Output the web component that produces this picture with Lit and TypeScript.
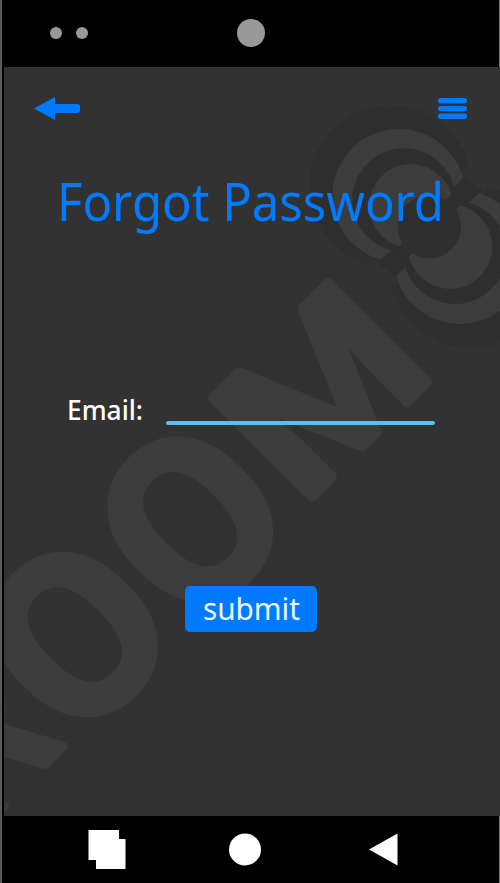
import { LitElement, html, css, svg } from "lit";
import { customElement } from "lit/decorators.js";

@customElement("app-root")
export class AppRoot extends LitElement {
  static styles = css`
    :host { display: block; height: 883px; background: #5c5c5c; padding-left: 2px; box-sizing: border-box; overflow: hidden; font-family: "Noto Sans", "Open Sans", sans-serif; }
    .phone { height: 883px; display: flex; flex-direction: column; background: #000; }
    .sensors { height: 67px; display: flex; align-items: center; box-sizing: border-box; padding: 0 0 1px 48px; border-right: 1px solid #777; }
    .dot { width: 12px; height: 12px; border-radius: 50%; background: #999; margin-right: 14px; }
    .camera { width: 28px; height: 28px; border-radius: 50%; background: #999; margin-left: 134.5px; }
    .screen { height: 749px; box-sizing: border-box; margin-left: 2px; background: #323232; position: relative; overflow: hidden; }
    .mark { position: absolute; left: -4px; top: -67px; width: 500px; height: 883px; }
    .mark text { font-family: Roboto, sans-serif; font-weight: 500; font-size: 201px; fill: #3c3c3c; stroke: #3c3c3c; stroke-width: 8px; stroke-linejoin: round; }
    .mark .o { stroke-width: 10px; }
    .mark .m { stroke-width: 10px; }
    .lit { fill: #3c3c3c; }
    .dim { fill: #2e2e2e; }
    .content { position: relative; display: flex; flex-direction: column; height: 100%; }
    .bar { display: flex; justify-content: space-between; align-items: flex-start; padding: 29px 33px 0 30px; height: 54px; box-sizing: border-box; }
    .icon { display: block; fill: #007bff; }
    svg.text { display: block; overflow: visible; }
    .title { margin: 47px 0 0 54px; height: 80px; }
    .title text { font-size: 52.500px; font-weight: 400; fill: #007bff; }
    .field { display: flex; align-items: flex-start; margin: 145px 0 0 63px; height: 50px; }
    .field text { font-size: 27.500px; font-weight: 500; fill: #fff; }
    .line { width: 269px; height: 4px; margin: 28px 0 0 19px; border-radius: 2px; background: #5ebcf0; }
    button { font: inherit; border: 0; padding: 0; margin: 143px 0 0 181px; width: 132px; height: 46px; border-radius: 5px; background: #007bff; }
    button text { font-size: 30px; fill: #eef8ff; }
    .nav { flex: 1; border-right: 1px solid #777; }
    .nav svg { display: block; fill: #fff; }
  `;

  private fit(label: string, width: number, height: number, x: number, y: number, length: number) {
    return html`<svg class="text" width=${width} height=${height}>
      <text x=${x} y=${y} textLength=${length} lengthAdjust="spacingAndGlyphs">${label}</text>
    </svg>`;
  }

  private watermark() {
    return svg`
      <g transform="rotate(-45)">
        <text x="-605" y="573">R</text>
        <text class="o" transform="translate(-395.500 501) scale(1.13 1.11)" x="-69.500" y="72">O</text>
        <text class="o" transform="translate(-232.600 501) scale(1.13 1.11)" x="-69.500" y="72">O</text>
        <text class="m" transform="translate(-136 572) scale(1.1 .98)" x="-9" y="0">M</text>
      </g>
      <g transform="translate(290 60) scale(.333333)">
        <defs>
          <clipPath id="a"><path d="M-100-100H953L-100 953z"/></clipPath>
          <clipPath id="b"><path d="M-100-100H973L-100 973z"/></clipPath>
          <clipPath id="e"><path d="M-100-100H987L-100 987z"/></clipPath>
          <clipPath id="f"><path d="M1200 1200V-253L-253 1200z"/></clipPath>
          <clipPath id="c"><path d="M1200 1200V-235L-235 1200z"/></clipPath>
          <clipPath id="d"><path d="M1200 1200V-220L-220 1200z"/></clipPath>
        </defs>
        <circle class="dim" cx="302" cy="379" r="244" clip-path="url(#a)"/>
        <circle class="dim" cx="540" cy="620" r="244" clip-path="url(#d)"/>
        <path class="dim" d="M520 345L575 392L318 655L255 600z"/>
        <circle class="lit" cx="327" cy="407" r="200" clip-path="url(#b)"/>
        <circle class="lit" cx="510" cy="592" r="200" clip-path="url(#c)"/>
        <circle class="dim" cx="342" cy="420" r="155" clip-path="url(#e)"/>
        <circle class="dim" cx="495" cy="577" r="155" clip-path="url(#f)"/>
        <circle class="lit" cx="363" cy="438" r="126" clip-path="url(#e)"/>
        <circle class="lit" cx="480" cy="560" r="127" clip-path="url(#f)"/>
        <circle class="dim" cx="418" cy="500" r="95"/>
      </g>`;
  }

  render() {
    return html`<div class="phone">
      <div class="sensors"><i class="dot"></i><i class="dot"></i><i class="camera"></i></div>
      <main class="screen">
        <svg class="mark" viewBox="0 0 500 883" aria-hidden="true">${this.watermark()}</svg>
        <div class="content">
          <div class="bar">
            <svg class="icon" width="47" height="25"><path d="M0 12.500L21 1V8H43Q46 8 46 11V14Q46 17 43 17H21V24z"/></svg>
            <svg class="icon" width="29" height="24"><rect y="2" width="29" height="5.500" rx="2.700"/><rect y="10" width="29" height="5.200" rx="2.600"/><rect y="17.500" width="29" height="5.500" rx="2.700"/></svg>
          </div>
          <div class="title">${this.fit("Forgot Password", 395, 70, -1, 53, 387)}</div>
          <div class="field">${this.fit("Email:", 80, 45, 0, 27, 76)}<div class="line"></div></div>
          <button>${this.fit("submit", 132, 46, 18, 34, 97)}</button>
        </div>
      </main>
      <nav class="nav"><svg width="497" height="67"><path d="M86.500 14H117V23H123.500V53H94V44H86.500z"/><circle cx="243" cy="33.500" r="16"/><path d="M367 33.500L395.500 17.500V49.500z"/></svg></nav>
    </div>`;
  }
}
